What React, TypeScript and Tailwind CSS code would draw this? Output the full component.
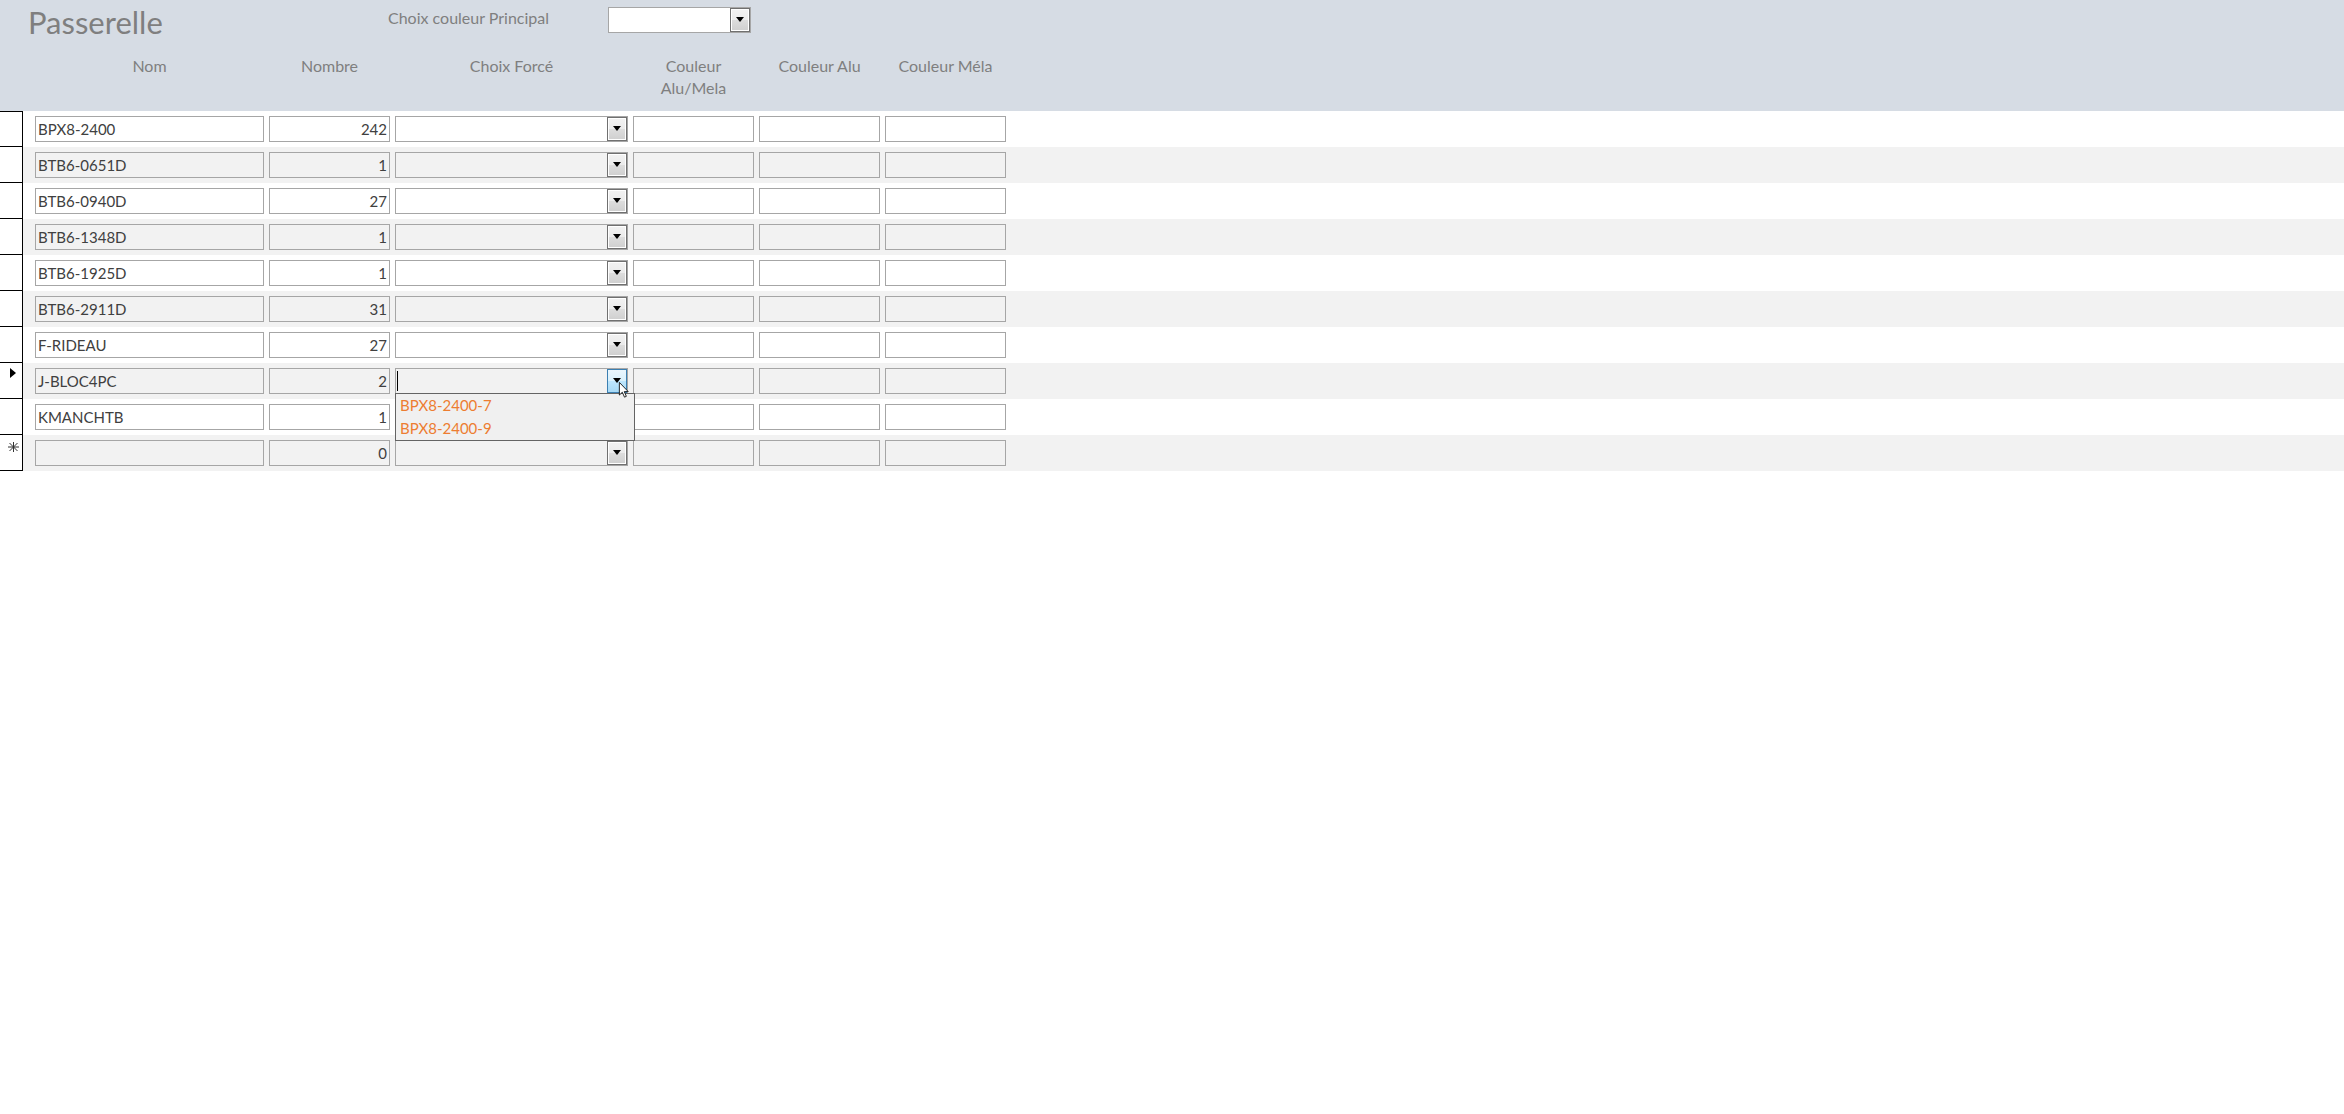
const rows = [
  { nom: "BPX8-2400", n: 242 },
  { nom: "BTB6-0651D", n: 1 },
  { nom: "BTB6-0940D", n: 27 },
  { nom: "BTB6-1348D", n: 1 },
  { nom: "BTB6-1925D", n: 1 },
  { nom: "BTB6-2911D", n: 31 },
  { nom: "F-RIDEAU", n: 27 },
  { nom: "J-BLOC4PC", n: 2 },
  { nom: "KMANCHTB", n: 1 },
  { nom: "", n: 0 },
];

const Arrow = () => (
  <svg width="8" height="5" viewBox="0 0 8 5" className="block">
    <polygon points="0,0 8,0 4,5" fill="#000" />
  </svg>
);

const DropButton = ({ active = false }: { active?: boolean }) => (
  <div
    className={
      active
        ? "w-[20px] h-full shrink-0 border border-[#3c7fb1] bg-[linear-gradient(to_bottom,#eaf6fd_0%,#d9f0fc_50%,#bee6fd_50%,#a7d9f5_100%)] flex justify-center pt-[8px]"
        : "w-[20px] h-full shrink-0 border border-[#707070] shadow-[inset_0_0_0_1px_#ffffff] bg-[linear-gradient(to_bottom,#f2f2f2_0%,#ebebeb_50%,#dddddd_50%,#cfcfcf_100%)] flex justify-center pt-[8px]"
    }
  >
    <Arrow />
  </div>
);

const Field = ({ w, text, right }: { w: string; text?: string | number; right?: boolean }) => (
  <div
    className={`${w} h-[26px] border border-[#a6a6a6] text-[15px] leading-[24px] text-[#404040] whitespace-nowrap overflow-hidden ${
      right ? "text-right pr-[2px]" : "pl-[2px]"
    }`}
  >
    {text}
  </div>
);

const Combo = ({ open }: { open?: boolean }) => (
  <div className="w-[233px] h-[26px] border border-[#a6a6a6] flex relative">
    <div className="flex-1 relative">
      {open && <div className="absolute left-[1px] top-[2px] w-px h-[20px] bg-black" />}
    </div>
    <DropButton active={open} />
    {open && (
      <>
        <div className="absolute left-[-1px] top-full w-[240px] h-[48px] border border-[#646464] bg-[#f0f0f0] z-10 pl-[4px]">
          <div className="text-[15px] leading-[23px] text-[#ed7d31]">BPX8-2400-7</div>
          <div className="text-[15px] leading-[23px] text-[#ed7d31]">BPX8-2400-9</div>
        </div>
        <svg
          width="12"
          height="16"
          viewBox="0 0 12 19"
          className="absolute left-[222px] top-[13px] z-20"
        >
          <path
            d="M0.5 0.5 L0.5 15.5 L4 12.2 L6.6 18 L8.8 17 L6.3 11.4 L11 11.4 Z"
            fill="#fff"
            stroke="#000"
            strokeWidth="1"
          />
        </svg>
      </>
    )}
  </div>
);

export default function App() {
  return (
    <div className="min-h-screen w-full bg-white font-['Lato',sans-serif]">
      <div className="h-[111px] bg-[#d6dce4] text-[#7f7f7f]">
        <div className="flex h-[55px] items-start">
          <div className="w-[388px] pl-[28px] pt-[4px] text-[31px] leading-[36px]">Passerelle</div>
          <div className="w-[220px] pt-[7px] text-[16px] leading-[22px]">Choix couleur Principal</div>
          <div className="mt-[7px] w-[143px] h-[26px] border border-[#a6a6a6] bg-white flex">
            <div className="flex-1" />
            <DropButton />
          </div>
        </div>
        <div className="flex pl-[35px] gap-[5px] text-[16px] leading-[22px] text-center">
          <div className="w-[229px]">Nom</div>
          <div className="w-[121px]">Nombre</div>
          <div className="w-[233px]">Choix Forcé</div>
          <div className="w-[121px]">
            Couleur
            <br />
            Alu/Mela
          </div>
          <div className="w-[121px]">Couleur Alu</div>
          <div className="w-[121px]">Couleur Méla</div>
        </div>
      </div>
      <div>
        {rows.map((r, i) => (
          <div key={i} className={`flex h-[36px] ${i % 2 ? "bg-[#f2f2f2]" : "bg-white"}`}>
            <div
              className={`w-[23px] shrink-0 bg-white border-r border-b border-black relative ${
                i === 0 ? "border-t" : ""
              }`}
            >
              {i === 7 && (
                <svg width="6" height="10" viewBox="0 0 6 10" className="absolute left-[10px] top-[5px]">
                  <polygon points="0,0 6,5 0,10" fill="#000" />
                </svg>
              )}
              {i === 9 && (
                <svg width="11" height="10" viewBox="0 0 11 10" className="absolute left-[8px] top-[7px]">
                  <g stroke="#333" strokeWidth="1">
                    <line x1="5.5" y1="0" x2="5.5" y2="10" />
                    <line x1="0" y1="5" x2="11" y2="5" />
                    <line x1="1.5" y1="1" x2="9.5" y2="9" />
                    <line x1="9.5" y1="1" x2="1.5" y2="9" />
                  </g>
                </svg>
              )}
            </div>
            <div className="flex gap-[5px] pl-[12px] pt-[5px]">
              <Field w="w-[229px]" text={r.nom} />
              <Field w="w-[121px]" text={r.n} right />
              <Combo open={i === 7} />
              <Field w="w-[121px]" />
              <Field w="w-[121px]" />
              <Field w="w-[121px]" />
            </div>
          </div>
        ))}
      </div>
    </div>
  );
}
